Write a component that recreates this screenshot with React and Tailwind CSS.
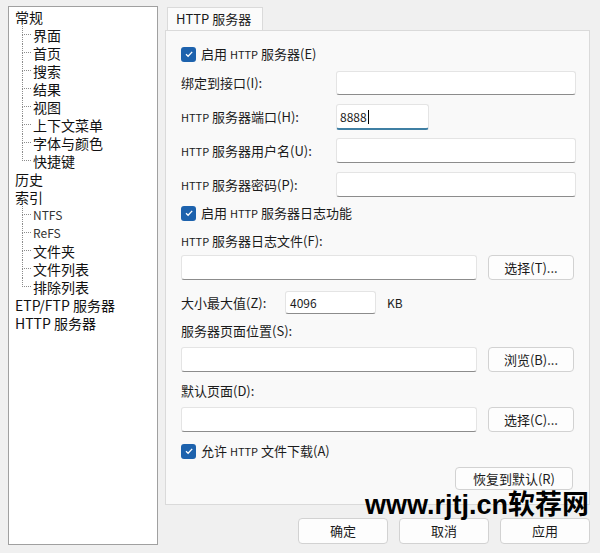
import React from "react";

const tree = [
  { t: "常规", children: ["界面", "首页", "搜索", "结果", "视图", "上下文菜单", "字体与颜色", "快捷键"] },
  { t: "历史" },
  { t: "索引", children: ["NTFS", "ReFS", "文件夹", "文件列表", "排除列表"] },
  { t: "ETP/FTP 服务器" },
  { t: "HTTP 服务器" },
];

const Field = ({ className }) => (
  <div className={`rounded-[3px] border border-[#e4e4e4] border-b-[#8c8c8c] bg-white ${className}`} />
);

const Btn = ({ children, className }) => (
  <button className={`flex items-center justify-center rounded-[4px] border border-[#d2d2d2] bg-[#fdfdfd] text-[13px] text-[#1b1b1b] ${className}`}>
    {children}
  </button>
);

const Check = ({ children }) => (
  <div className="flex h-[16px] items-center gap-[5px]">
    <span className="flex h-[15px] w-[15px] items-center justify-center rounded-[3px] bg-[#1d62ad]">
      <svg width="10" height="10" viewBox="0 0 10 10">
        <path d="M2 5.3 4.1 7.3 8.2 2.9" fill="none" stroke="white" strokeWidth="1.3" />
      </svg>
    </span>
    <span>{children}</span>
  </div>
);

const H = () => <span className="text-[11px]">HTTP</span>;

const Label = ({ children }) => <div className="flex h-[16px] items-center">{children}</div>;

export default function App() {
  return (
    <div className="relative h-[553px] w-[600px] overflow-hidden bg-[#f0f0f0] font-['Noto_Sans_CJK_SC',sans-serif] text-[13px] text-[#1b1b1b]">
      <div className="flex pl-[8px] pt-[6px]">
        {/* tree */}
        <div className="h-[539px] w-[150px] border border-[#a0a0a0] bg-white pl-[6px] pt-[1px] text-[14px] leading-[18px] text-[#111]">
          {tree.map((n) => (
            <div key={n.t}>
              <div className="h-[18px]">{n.t}</div>
              {n.children &&
                n.children.map((c, i) => {
                  const last = i === n.children.length - 1;
                  const small = c === "NTFS" || c === "ReFS";
                  return (
                    <div key={c} className="flex h-[18px] pl-[7px]">
                      <div className="flex w-[9px] flex-col">
                        <div className="h-[9px] border-b border-l border-dotted border-[#8c8c8c]" />
                        <div className={last ? "h-[9px]" : "h-[9px] border-l border-dotted border-[#8c8c8c]"} />
                      </div>
                      <span className={small ? "ml-[2px] text-[12px] text-[#333]" : "ml-[2px]"}>{c}</span>
                    </div>
                  );
                })}
            </div>
          ))}
        </div>

        {/* right */}
        <div className="ml-[7px] flex w-[425px] flex-col">
          <div className="flex h-[24px] items-end pl-[2px]">
            <div className="flex h-[23px] w-[96px] items-center border border-b-0 border-[#dadada] bg-[#fbfbfb] pl-[8px] text-[13px]">
              HTTP 服务器
            </div>
          </div>
          <div className="flex h-[475px] flex-col border border-[#dadada] bg-[#f9f9f9] pl-[15px]">
            <div className="mt-[15px]">
              <Check>启用 <H /> 服务器(E)</Check>
            </div>
            <div className="mt-[9px] flex h-[24px] items-center">
              <span className="w-[155px]">绑定到接口(I):</span>
              <Field className="h-[24px] w-[240px]" />
            </div>
            <div className="mt-[9px] flex h-[26px] items-center">
              <span className="w-[155px]"><H /> 服务器端口(H):</span>
              <div className="flex h-[26px] w-[93px] items-center rounded-[3px] border border-[#e4e4e4] border-b-2 border-b-[#3f7fa3] bg-white pl-[3px] text-[12px]">
                8888<span className="ml-[1px] h-[14px] w-px bg-black" />
              </div>
            </div>
            <div className="mt-[8px] flex h-[25px] items-center">
              <span className="w-[155px]"><H /> 服务器用户名(U):</span>
              <Field className="h-[25px] w-[240px]" />
            </div>
            <div className="mt-[9px] flex h-[25px] items-center">
              <span className="w-[155px]"><H /> 服务器密码(P):</span>
              <Field className="h-[25px] w-[240px]" />
            </div>
            <div className="mt-[8px]">
              <Check>启用 <H /> 服务器日志功能</Check>
            </div>
            <div className="mt-[12px]">
              <Label><H />&nbsp;服务器日志文件(F):</Label>
            </div>
            <div className="mt-[6px] flex h-[25px] items-center gap-[11px]">
              <Field className="h-[25px] w-[296px]" />
              <Btn className="h-[25px] w-[86px]">选择(T)...</Btn>
            </div>
            <div className="mt-[11px] flex h-[23px] items-center">
              <span className="w-[104px]">大小最大值(Z):</span>
              <div className="flex h-[23px] w-[91px] items-center rounded-[3px] border border-[#e4e4e4] border-b-[#8c8c8c] bg-white pl-[4px] text-[12px]">
                4096
              </div>
              <span className="ml-[11px] text-[12px]">KB</span>
            </div>
            <div className="mt-[9px]">
              <Label>服务器页面位置(S):</Label>
            </div>
            <div className="mt-[8px] flex h-[25px] items-center gap-[11px]">
              <Field className="h-[25px] w-[296px]" />
              <Btn className="h-[25px] w-[86px]">浏览(B)...</Btn>
            </div>
            <div className="mt-[11px]">
              <Label>默认页面(D):</Label>
            </div>
            <div className="mt-[8px] flex h-[25px] items-center gap-[11px]">
              <Field className="h-[25px] w-[296px]" />
              <Btn className="h-[25px] w-[86px]">选择(C)...</Btn>
            </div>
            <div className="mt-[11px]">
              <Check>允许 <H /> 文件下载(A)</Check>
            </div>
            <div className="mt-[8px] pl-[274px]">
              <Btn className="h-[23px] w-[118px]">恢复到默认(R)</Btn>
            </div>
          </div>
          <div className="mt-[13px] flex justify-end gap-[11px] pr-[0px]">
            <Btn className="h-[26px] w-[90px] border-[#7aa2b3]">确定</Btn>
            <Btn className="h-[26px] w-[90px]">取消</Btn>
            <Btn className="h-[26px] w-[90px]">应用</Btn>
          </div>
        </div>
      </div>

      {/* watermark */}
      <div className="absolute left-[365px] top-[486px] whitespace-nowrap font-['Liberation_Sans','Noto_Sans_CJK_SC',sans-serif] text-[27px] font-bold leading-[34px] text-black">
        www.rjtj.cn<span className="font-['Noto_Sans_CJK_SC',sans-serif]">软荐网</span>
      </div>
    </div>
  );
}
